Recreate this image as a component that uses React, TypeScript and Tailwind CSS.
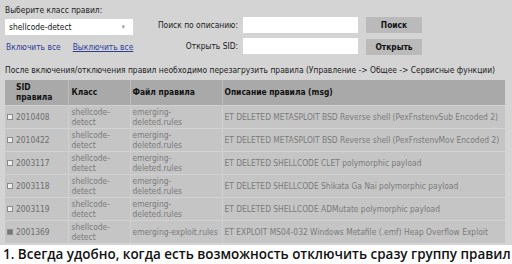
import React from "react";

const rows = [
  { sid: "2010408", cls: ["shellcode-", "detect"], file: ["emerging-", "deleted.rules"], msg: "ET DELETED METASPLOIT BSD Reverse shell (PexFnstenvSub Encoded 2)" },
  { sid: "2010422", cls: ["shellcode-", "detect"], file: ["emerging-", "deleted.rules"], msg: "ET DELETED METASPLOIT BSD Reverse shell (PexFnstenvMov Encoded 2)" },
  { sid: "2003117", cls: ["shellcode-", "detect"], file: ["emerging-", "deleted.rules"], msg: "ET DELETED SHELLCODE CLET polymorphic payload" },
  { sid: "2003118", cls: ["shellcode-", "detect"], file: ["emerging-", "deleted.rules"], msg: "ET DELETED SHELLCODE Shikata Ga Nai polymorphic payload" },
  { sid: "2003119", cls: ["shellcode-", "detect"], file: ["emerging-", "deleted.rules"], msg: "ET DELETED SHELLCODE ADMutate polymorphic payload" },
  { sid: "2001369", cls: ["shellcode-", "detect"], file: ["emerging-exploit.rules"], msg: "ET EXPLOIT MS04-032 Windows Metafile (.emf) Heap Overflow Exploit", checked: true },
];

export default function App() {
  return (
    <div className="w-[512px] h-[264px] overflow-hidden bg-[#d4d4d4] flex flex-col font-['DejaVu_Sans_Condensed','DejaVu_Sans',sans-serif] text-[8.4px] leading-[10px] text-[#222]">
      <div className="h-[80px] shrink-0 flex flex-col">
        <div className="flex h-[58px]">
          <div className="w-[133px] pl-[5px] flex flex-col">
            <div className="h-[19px] pt-[5px] whitespace-nowrap">Выберите класс правил:</div>
            <div className="h-[16px] bg-white flex items-center justify-between pl-[4px] pr-[8px] text-[#111]">
              <span>shellcode-detect</span>
              <span className="text-[#999] text-[7px]">▾</span>
            </div>
            <div className="flex mt-[7px] pl-[1px] text-[#2f3d96] whitespace-nowrap">
              <span>Включить все</span>
              <span className="ml-[12px] underline">Выключить все</span>
            </div>
          </div>
          <div className="flex flex-col pt-[17px] gap-[5px]">
            <div className="flex items-center h-[16px]">
              <div className="w-[105px] text-right whitespace-nowrap">Поиск по описанию:</div>
              <div className="ml-[5px] w-[115px] h-[16px] bg-white" />
              <div className="ml-[8px] w-[56px] h-[16px] bg-[#bababa] flex items-center justify-center font-bold text-[#111]">Поиск</div>
            </div>
            <div className="flex items-center h-[16px]">
              <div className="w-[105px] text-right whitespace-nowrap">Открыть SID:</div>
              <div className="ml-[5px] w-[115px] h-[16px] bg-white" />
              <div className="ml-[8px] w-[56px] h-[16px] mt-[1px] bg-[#bababa] flex items-center justify-center font-bold text-[#111]">Открыть</div>
            </div>
          </div>
        </div>
        <div className="pl-[5px] pt-[7px] whitespace-nowrap">После включения/отключения правил необходимо перезагрузить правила (Управление -&gt; Общее -&gt; Сервисные функции)</div>
      </div>
      <div className="h-[165px] shrink-0 overflow-hidden pl-[5px]">
        <table className="w-[500px] border-collapse table-fixed">
          <colgroup>
            <col className="w-[63px]" />
            <col className="w-[62px]" />
            <col className="w-[92px]" />
            <col />
          </colgroup>
          <thead>
            <tr className="h-[25px] bg-[#a9a9a9] text-[#111] font-bold text-left">
              <th className="pl-[11px] align-middle font-bold leading-[10px] border-r border-[#bdbdbd]">SID<br />правила</th>
              <th className="pl-[3px] align-middle font-bold border-r border-[#bdbdbd]">Класс</th>
              <th className="pl-[2px] align-middle font-bold border-r border-[#bdbdbd]">Файл правила</th>
              <th className="pl-[2px] align-middle font-bold">Описание правила (msg)</th>
            </tr>
          </thead>
          <tbody className="text-[#7b7b7b]">
            {rows.map((r) => (
              <tr key={r.sid} className="h-[23px] bg-[#c5c5c5] border-t border-[#d2d2d2]">
                <td className="pl-[2px] align-middle border-r border-[#d0d0d0] text-[#6e6e6e]">
                  <div className="flex items-center">
                    <span className={"inline-block w-[6px] h-[6px] border border-[#8a8a8a] " + (r.checked ? "bg-[#777]" : "bg-[#eeeeee]")} />
                    <span className="ml-[3px]">{r.sid}</span>
                  </div>
                </td>
                <td className="pl-[3px] align-middle border-r border-[#d0d0d0] leading-[10px]">
                  {r.cls[0]}<br />{r.cls[1]}
                </td>
                <td className="pl-[2px] align-middle border-r border-[#d0d0d0] leading-[10px] whitespace-nowrap">
                  {r.file.length > 1 ? (<>{r.file[0]}<br />{r.file[1]}</>) : r.file[0]}
                </td>
                <td className="pl-[2px] align-middle whitespace-nowrap overflow-hidden">{r.msg}</td>
              </tr>
            ))}
          </tbody>
        </table>
      </div>
      <div className="flex-1 bg-white pl-[3px] font-['Open_Sans',sans-serif] font-semibold text-[13.45px] leading-[19px] text-[#111] whitespace-nowrap">
        1. Всегда удобно, когда есть возможность отключить сразу группу правил
      </div>
    </div>
  );
}
